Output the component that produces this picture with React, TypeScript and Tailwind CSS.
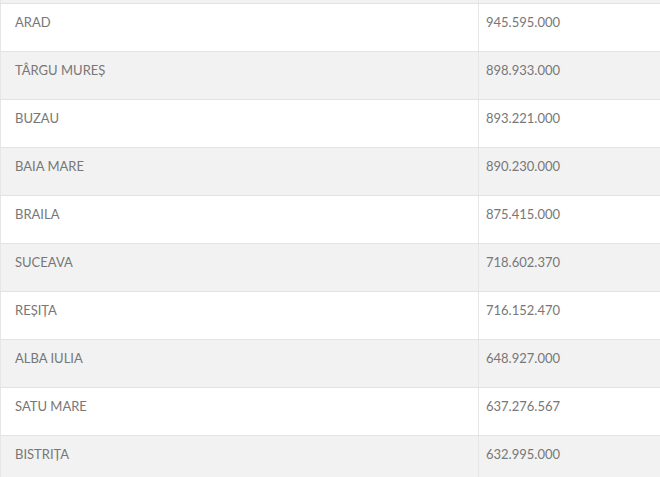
const rows = [
  { city: 'ARAD', value: '945.595.000' },
  { city: 'TÂRGU MUREȘ', value: '898.933.000' },
  { city: 'BUZAU', value: '893.221.000' },
  { city: 'BAIA MARE', value: '890.230.000' },
  { city: 'BRAILA', value: '875.415.000' },
  { city: 'SUCEAVA', value: '718.602.370' },
  { city: 'REȘIȚA', value: '716.152.470' },
  { city: 'ALBA IULIA', value: '648.927.000' },
  { city: 'SATU MARE', value: '637.276.567' },
  { city: 'BISTRIȚA', value: '632.995.000' },
];

export default function App() {
  return (
    <div className="w-[660px] h-[477px] overflow-hidden bg-white font-['Lato',sans-serif] text-[13px] leading-[20px] text-[#777]">
      <div className="flex h-[3px] bg-[#f2f2f2]">
        <div className="w-[478px] border-l border-[#e6e6e6]" />
        <div className="flex-1 border-l border-[#e6e6e6]" />
      </div>
      {rows.map((r, i) => (
        <div
          key={r.city}
          className={`flex h-[48px] border-t border-[#e3e3e3] ${i % 2 === 1 ? 'bg-[#f2f2f2]' : 'bg-white'}`}
        >
          <div className="w-[478px] border-l border-[#e6e6e6] pl-[14px] pt-[8px]">{r.city}</div>
          <div className="flex-1 border-l border-[#e6e6e6] pl-[7px] pt-[8px]">{r.value}</div>
        </div>
      ))}
    </div>
  );
}
